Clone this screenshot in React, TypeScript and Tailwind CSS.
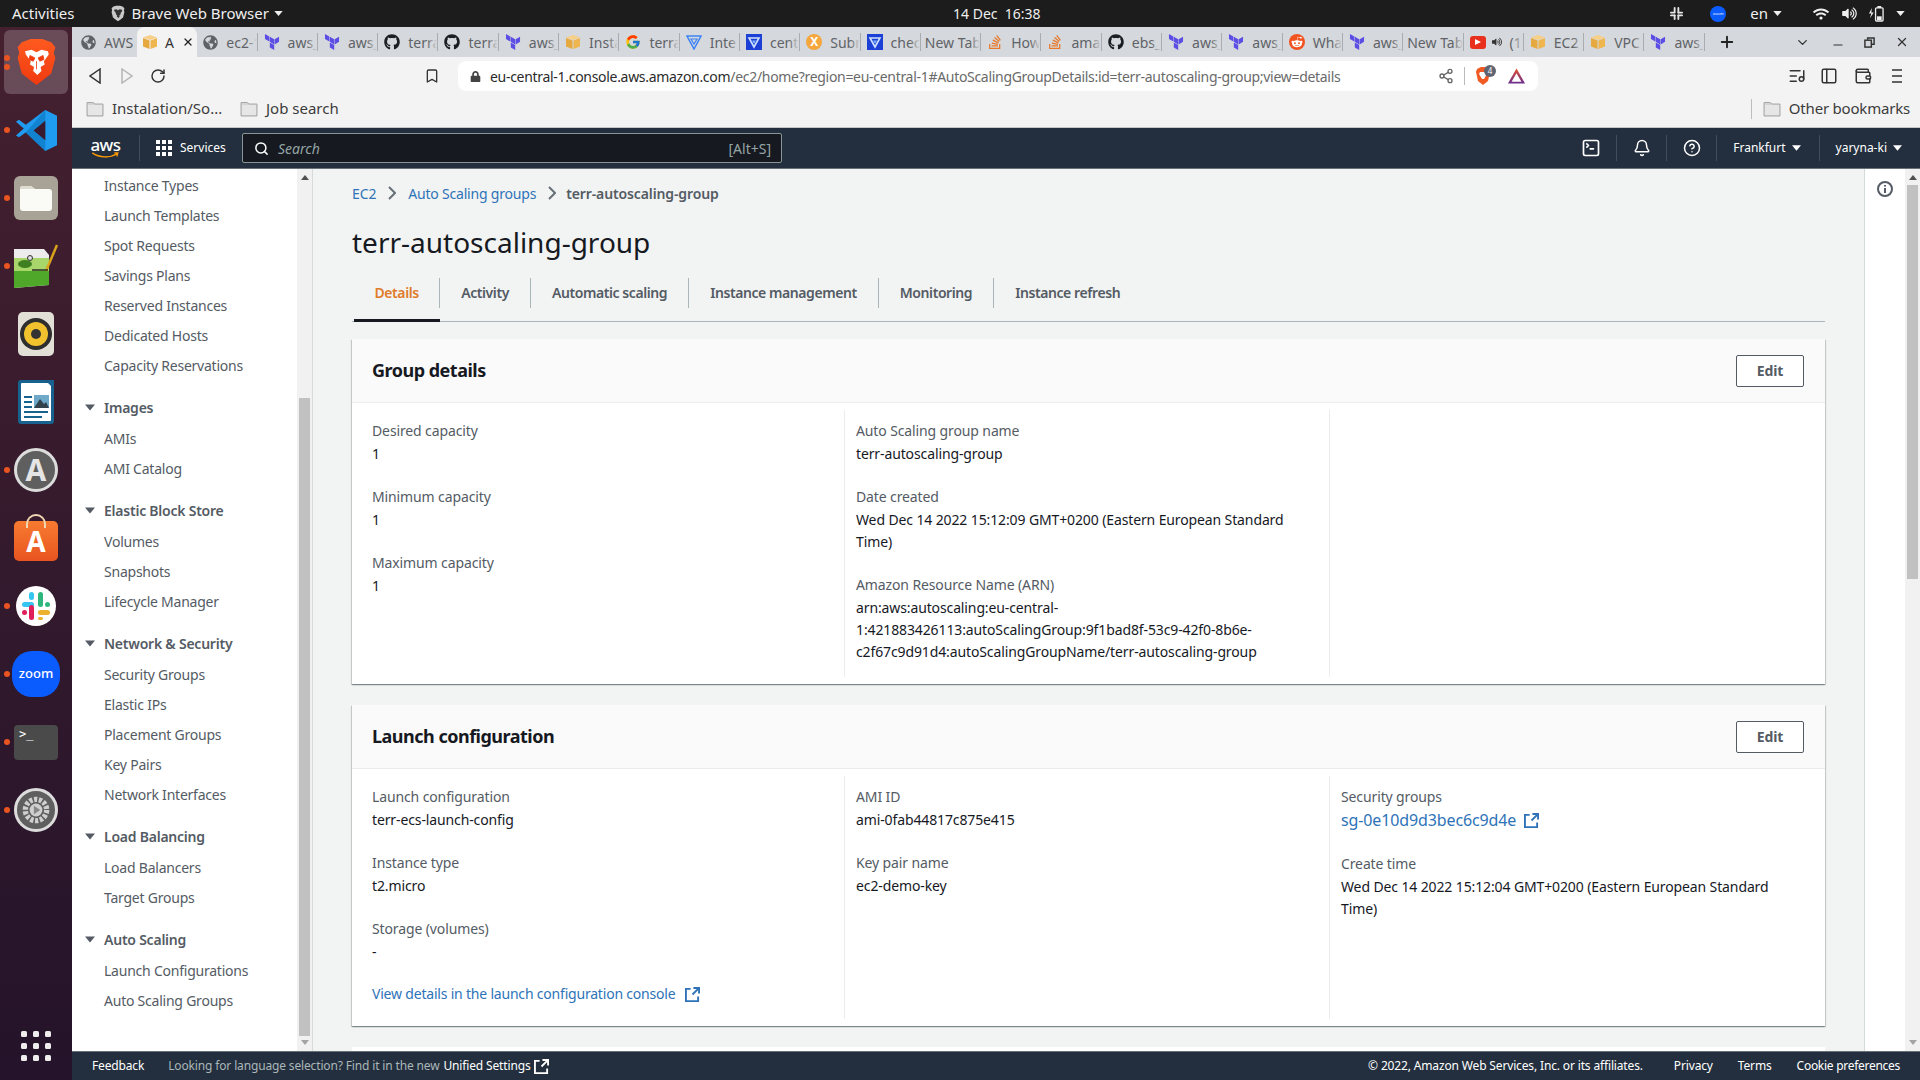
import { ReactNode } from 'react';
import {
  Bell,
  Bookmark,
  CircleHelp,
  ChevronDown,
  ListMusic,
  Minus,
  PanelLeft,
  Plus,
  RotateCw,
  Search,
  Share2,
  SquareTerminal,
  Wallet,
  X,
} from 'lucide-react';
import { FaGithub, FaGlobeAmericas, FaLock, FaRedditAlien, FaStackOverflow, FaVolumeUp, FaWifi } from 'react-icons/fa';
import { FcGoogle } from 'react-icons/fc';
import { SiTerraform } from 'react-icons/si';

function Caret({ className = 'w-[9px] h-[6px] fill-white' }: { className?: string }) {
  return (
    <svg viewBox="0 0 10 6" className={className}>
      <polygon points="0,0 10,0 5,6" />
    </svg>
  );
}

function AwsBox() {
  return (
    <svg viewBox="0 0 16 16" className="w-4 h-4 shrink-0">
      <polygon points="8,1 15,3.5 8,6 1,3.5" fill="#f7cf87" />
      <polygon points="1,4 7.5,6.4 7.5,15 1,12.5" fill="#e6a93f" />
      <polygon points="15,4 8.5,6.4 8.5,15 15,12.5" fill="#efb650" />
    </svg>
  );
}

function VShield() {
  return (
    <svg viewBox="0 0 16 16" className="w-4 h-4 shrink-0">
      <rect width="16" height="16" fill="#1c3fd6" />
      <path d="M3 4h10l-5 9z" fill="none" stroke="#cfe0ff" strokeWidth="1.6" />
      <path d="M6 6.5h4L8 10z" fill="#7fb2ff" />
    </svg>
  );
}

function TabGlyph({ kind }: { kind: string }) {
  switch (kind) {
    case 'globe':
      return <FaGlobeAmericas className="w-[15px] h-[15px] shrink-0 text-[#5f6368]" />;
    case 'box':
      return <AwsBox />;
    case 'tf':
      return <SiTerraform className="w-4 h-4 shrink-0 text-[#5c4ee5]" />;
    case 'gh':
      return <FaGithub className="w-4 h-4 shrink-0 text-[#1b1f23]" />;
    case 'g':
      return <FcGoogle className="w-4 h-4 shrink-0" />;
    case 'vg':
      return (
        <svg viewBox="0 0 16 16" className="w-4 h-4 shrink-0">
          <path d="M1 2h14l-7 13z" fill="none" stroke="#3b82f6" strokeWidth="1.5" />
          <path d="M5 5h6l-3 5z" fill="none" stroke="#3b82f6" strokeWidth="1.2" />
        </svg>
      );
    case 'v':
      return <VShield />;
    case 'x':
      return (
        <div className="w-4 h-4 shrink-0 rounded-full bg-[#f5a63c] text-white text-[12px] leading-4 text-center font-bold">
          X
        </div>
      );
    case 'so':
      return <FaStackOverflow className="w-4 h-4 shrink-0 text-[#e8792b]" />;
    case 'reddit':
      return (
        <div className="w-4 h-4 shrink-0 rounded-full bg-[#f1521f] flex items-center justify-center">
          <FaRedditAlien className="w-3 h-3 text-white" />
        </div>
      );
    case 'yt':
      return (
        <div className="flex items-center gap-[6px] shrink-0">
          <div className="w-4 h-[13px] rounded-[3px] bg-[#e8301c] flex items-center justify-center">
            <svg viewBox="0 0 6 6" className="w-[6px] h-[6px] fill-white">
              <polygon points="0,0 6,3 0,6" />
            </svg>
          </div>
          <FaVolumeUp className="w-[10px] h-[10px] text-[#333]" />
        </div>
      );
    default:
      return null;
  }
}

const tabs = [
  { kind: 'box', label: 'A', active: true },
  { kind: 'globe', label: 'ec2-1' },
  { kind: 'tf', label: 'aws_' },
  { kind: 'tf', label: 'aws_' },
  { kind: 'gh', label: 'terra' },
  { kind: 'gh', label: 'terra' },
  { kind: 'tf', label: 'aws_' },
  { kind: 'box', label: 'Insta' },
  { kind: 'g', label: 'terra' },
  { kind: 'vg', label: 'Inte' },
  { kind: 'v', label: 'cent' },
  { kind: 'x', label: 'Subm' },
  { kind: 'v', label: 'chec' },
  { kind: '', label: 'New Tab' },
  { kind: 'so', label: 'How' },
  { kind: 'so', label: 'ama' },
  { kind: 'gh', label: 'ebs_' },
  { kind: 'tf', label: 'aws_' },
  { kind: 'tf', label: 'aws_' },
  { kind: 'reddit', label: 'Wha' },
  { kind: 'tf', label: 'aws_' },
  { kind: '', label: 'New Tab' },
  { kind: 'yt', label: '(1' },
  { kind: 'box', label: 'EC2' },
  { kind: 'box', label: 'VPC' },
  { kind: 'tf', label: 'aws_' },
];

function TabStrip() {
  return (
    <div className="h-[30px] bg-[#d5d8dc] flex items-stretch text-[14px] font-['Noto_Sans',sans-serif] text-[#5f6368] shrink-0">
      <div className="w-[65px] flex items-center gap-[8px] pl-[9px] shrink-0 overflow-hidden">
        <TabGlyph kind="globe" />
        <span className="whitespace-nowrap">AWS</span>
      </div>
      {tabs.map((t, i) =>
        t.active ? (
          <div key={i} className="w-[60.3px] bg-[#f3f3f3] rounded-t-lg flex items-center gap-[7px] pl-[5px] shrink-0 text-[#333]">
            <TabGlyph kind={t.kind} />
            <span>{t.label}</span>
            <X className="w-[12px] h-[12px] ml-[1px] text-[#222]" strokeWidth={2.5} />
          </div>
        ) : (
          <div key={i} className="w-[60.3px] flex items-center shrink-0 overflow-hidden relative">
            <div className={`flex items-center gap-[8px] flex-1 overflow-hidden ${t.kind ? 'pl-[6px]' : 'pl-[4px]'}`}>
              <TabGlyph kind={t.kind} />
              <span className="whitespace-nowrap">{t.label}</span>
            </div>
            <div className="absolute right-0 top-[6px] bottom-[6px] w-px bg-[#a9adb1]" />
            <div className="absolute right-px top-0 bottom-0 w-[10px] bg-gradient-to-r from-transparent to-[#d5d8dc]" />
          </div>
        ),
      )}
      <div className="flex-1 flex items-center">
        <Plus className="w-[18px] h-[18px] ml-[13px] text-[#222]" strokeWidth={2.5} />
        <ChevronDown className="w-[15px] h-[15px] ml-[59px] text-[#333]" strokeWidth={2.2} />
        <Minus className="w-[14px] h-[14px] ml-[21px] mt-[6px] text-[#333]" strokeWidth={2} />
        <svg viewBox="0 0 12 12" className="w-[11px] h-[11px] ml-[19px] fill-none stroke-[#333] stroke-[1.6]">
          <rect x="1" y="3.5" width="7" height="7.5" />
          <path d="M4 3V1h7v7H8.5" />
        </svg>
        <X className="w-[14px] h-[14px] ml-[20px] text-[#333]" strokeWidth={2.2} />
      </div>
    </div>
  );
}

function Toolbar() {
  return (
    <div className="h-[37px] bg-[#f3f3f3] flex items-center shrink-0 font-['Noto_Sans',sans-serif]">
      <svg viewBox="0 0 12 16" className="ml-[17px] w-[12px] h-[16px] fill-none stroke-[#333] stroke-[1.5]">
        <polygon points="11,1 1,8 11,15" />
      </svg>
      <svg viewBox="0 0 12 16" className="ml-[20px] w-[12px] h-[16px] fill-none stroke-[#b5b5b5] stroke-[1.5]">
        <polygon points="1,1 11,8 1,15" />
      </svg>
      <RotateCw className="ml-[17px] w-[16px] h-[16px] text-[#333]" strokeWidth={2.2} />
      <Bookmark className="ml-[258px] w-[16px] h-[16px] text-[#333]" strokeWidth={2} />
      <div className="ml-[18px] w-[1080px] h-[30px] bg-white rounded-lg flex items-center text-[14px] mt-[1px]">
        <FaLock className="ml-[12px] w-[11px] h-[11px] text-[#444]" />
        <div className="ml-[9px] w-[852px] whitespace-nowrap tracking-[-0.3px] text-[#6a6a6a]">
          <span className="text-[#2b2b2b]">eu-central-1.console.aws.amazon.com</span>
          <span>/ec2/home?region=eu-central-1#AutoScalingGroupDetails:id=terr-autoscaling-group;view=details</span>
        </div>
        <Share2 className="ml-[96px] w-[16px] h-[16px] text-[#666]" strokeWidth={2} />
        <div className="ml-[10px] w-px h-[18px] bg-[#bbb]" />
        <div className="relative ml-[10px] w-[20px] h-[20px]">
          <svg viewBox="0 0 16 20" className="w-[16px] h-[20px]">
            <path d="M2 3l4-2h4l4 2 1 3-2 9-5 4-5-4-2-9z" fill="#f15a22" />
            <path d="M5 6h6l1 2-3 5H7L4 8z" fill="#fff" />
          </svg>
          <div className="absolute -top-[1px] left-[9px] w-[12px] h-[12px] rounded-full bg-[#5f6470] text-white text-[8px] leading-[12px] text-center">4</div>
        </div>
        <svg viewBox="0 0 20 18" className="ml-[12px] w-[19px] h-[18px]">
          <defs>
            <linearGradient id="bat" x1="0" y1="0" x2="0" y2="1">
              <stop offset="0" stopColor="#e8502b" />
              <stop offset="1" stopColor="#662d91" />
            </linearGradient>
          </defs>
          <polygon points="10,1 19,17 1,17" fill="url(#bat)" />
          <polygon points="10,6 15.2,15 4.8,15" fill="#fff" />
        </svg>
      </div>
      <ListMusic className="ml-[250px] w-[18px] h-[18px] text-[#333]" strokeWidth={2} />
      <PanelLeft className="ml-[14px] w-[18px] h-[18px] text-[#333]" strokeWidth={2} />
      <Wallet className="ml-[16px] w-[18px] h-[18px] text-[#333]" strokeWidth={2} />
      <svg viewBox="0 0 10 16" className="ml-[20px] w-[10px] h-[16px] stroke-[#333] stroke-[1.6]">
        <path d="M0 2h10M0 8h10M0 14h10" />
      </svg>
    </div>
  );
}

function FolderIcon() {
  return (
    <svg viewBox="0 0 18 17" className="w-[18px] h-[17px] shrink-0">
      <path d="M1 2.5h6l2 1.5h8v12H1z" fill="#d4d4d4" stroke="#a8a8a8" strokeWidth="1" />
      <rect x="2" y="5" width="14" height="10" fill="#e6e6e6" />
    </svg>
  );
}

function BookmarksBar() {
  return (
    <div className="h-[34px] bg-[#f3f3f3] border-b border-[#c4c7ca] flex items-center shrink-0 text-[15px] text-[#3c3c3c] font-['Noto_Sans',sans-serif] pl-[14px] pr-[10px] pb-[4px]">
      <FolderIcon />
      <span className="ml-[8px] w-[111px] whitespace-nowrap">Instalation/So...</span>
      <div className="ml-[17px]"><FolderIcon /></div>
      <span className="ml-[8px]">Job search</span>
      <div className="ml-auto w-px h-[20px] bg-[#bdbdbd]" />
      <div className="ml-[11px]"><FolderIcon /></div>
      <span className="ml-[8px] tracking-[-0.2px]">Other bookmarks</span>
    </div>
  );
}

function NavSep() {
  return <div className="w-px h-[26px] bg-[#414d5c] shrink-0" />;
}

function AwsNav() {
  return (
    <div className="h-[41px] bg-[#232f3e] border-b border-[#687078] flex items-center shrink-0 text-white text-[12px] font-['Noto_Sans',sans-serif]">
      <div className="ml-[18px] w-[31px] flex flex-col items-center">
        <span className="text-[17px] leading-[15px] font-medium tracking-[-0.5px]">aws</span>
        <svg viewBox="0 0 32 8" className="w-[31px] h-[7px] fill-none stroke-[#f90] stroke-[1.6]">
          <path d="M1 1c8 6 20 6 28 1M26 1l4 0-1 4" />
        </svg>
      </div>
      <div className="ml-[18px]"><NavSep /></div>
      <svg viewBox="0 0 16 16" className="ml-[16px] w-[16px] h-[16px] fill-white">
        {[0, 6, 12].flatMap((y) => [0, 6, 12].map((x) => <rect key={`${x}-${y}`} x={x} y={y} width="4" height="4" />))}
      </svg>
      <span className="ml-[8px] w-[45px]">Services</span>
      <div className="ml-[17px] w-[540px] h-[30px] rounded-[2px] border border-[#879596] bg-[#16191f] flex items-center">
        <Search className="ml-[11px] w-[15px] h-[15px] text-white" strokeWidth={2.4} />
        <span className="ml-[9px] text-[14px] italic text-[#95a5a6]">Search</span>
        <span className="ml-auto mr-[10px] text-[14px] text-[#95a5a6]">[Alt+S]</span>
      </div>
      <div className="ml-auto flex items-center">
        <SquareTerminal className="w-[20px] h-[20px]" strokeWidth={2} />
        <div className="ml-[15px]"><NavSep /></div>
        <Bell className="ml-[16px] w-[18px] h-[18px]" strokeWidth={2} />
        <div className="ml-[15px]"><NavSep /></div>
        <CircleHelp className="ml-[16px] w-[18px] h-[18px]" strokeWidth={2} />
        <div className="ml-[15px]"><NavSep /></div>
        <span className="ml-[16px]">Frankfurt</span>
        <Caret className="ml-[6px] w-[9px] h-[6px] fill-white" />
        <div className="ml-[18px]"><NavSep /></div>
        <span className="ml-[16px]">yaryna-ki</span>
        <Caret className="ml-[6px] mr-[18px] w-[9px] h-[6px] fill-white" />
      </div>
    </div>
  );
}

const sideNav: { title?: string; items: string[] }[] = [
  {
    items: ['Instance Types', 'Launch Templates', 'Spot Requests', 'Savings Plans', 'Reserved Instances', 'Dedicated Hosts', 'Capacity Reservations'],
  },
  { title: 'Images', items: ['AMIs', 'AMI Catalog'] },
  { title: 'Elastic Block Store', items: ['Volumes', 'Snapshots', 'Lifecycle Manager'] },
  { title: 'Network & Security', items: ['Security Groups', 'Elastic IPs', 'Placement Groups', 'Key Pairs', 'Network Interfaces'] },
  { title: 'Load Balancing', items: ['Load Balancers', 'Target Groups'] },
  { title: 'Auto Scaling', items: ['Launch Configurations', 'Auto Scaling Groups'] },
];

function Scrollbar({ thumb }: { thumb: string }) {
  return (
    <div className="w-[15px] h-full bg-[#f1f1f1] flex flex-col items-center shrink-0 relative">
      <Caret className="mt-[6px] w-[8px] h-[5px] fill-[#505050] rotate-180" />
      <div className={thumb} />
      <Caret className="absolute bottom-[6px] w-[8px] h-[5px] fill-[#a3a3a3]" />
    </div>
  );
}

function Sidebar() {
  return (
    <div className="w-[241px] h-full flex shrink-0 bg-white border-r border-[#d5dbdb] text-[14px] text-[#545b64] tracking-[-0.23px]">
      <div className="w-[225px] pt-[2px]">
        {sideNav.map((group, i) => (
          <div key={i} className={group.title ? 'mt-[12px]' : ''}>
            {group.title && (
              <div className="h-[31px] pb-[3px] flex items-center font-semibold">
                <Caret className="ml-[13px] w-[10px] h-[7px] fill-[#545b64]" />
                <span className="ml-[9px]">{group.title}</span>
              </div>
            )}
            {group.items.map((item) => (
              <div key={item} className="h-[30px] leading-[30px] pl-[32px]">{item}</div>
            ))}
          </div>
        ))}
      </div>
      <Scrollbar thumb="mt-[218px] w-[11px] h-[638px] bg-[#c1c1c1]" />
    </div>
  );
}

function ExternalIcon({ className = 'text-[#2e73b8]' }: { className?: string }) {
  return (
    <svg viewBox="0 0 16 16" className={`w-[15px] h-[15px] inline-block fill-none stroke-current stroke-2 ${className}`}>
      <path d="M6 2H1v13h13v-5" />
      <path d="M8 8l6-6M9 1h6v6" />
    </svg>
  );
}

function Field({ label, children }: { label: string; children: ReactNode }) {
  return (
    <div className="mb-[21px]">
      <div className="text-[#545b64] leading-[22px]">{label}</div>
      <div className="mt-px text-[#16191f] leading-[22px]">{children}</div>
    </div>
  );
}

function Card({ title, children }: { title: string; children: ReactNode }) {
  return (
    <div className="bg-white shadow-[0_1px_1px_0_rgba(0,28,36,0.3),1px_1px_1px_0_rgba(0,28,36,0.15),-1px_1px_1px_0_rgba(0,28,36,0.15)]">
      <div className="h-[64px] bg-[#fafafa] border-b border-[#eaeded] flex items-center justify-between pl-[20px] pr-[21px]">
        <div className="text-[18px] font-bold text-[#16191f] tracking-[-0.5px]">{title}</div>
        <button className="w-[68px] h-[32px] border border-[#545b64] rounded-[2px] bg-white text-[14px] font-bold text-[#545b64]">
          Edit
        </button>
      </div>
      {children}
    </div>
  );
}

function Column({ children, width }: { children?: ReactNode; width: string }) {
  return <div className={`${width} pt-[10px] pr-[16px] shrink-0`}>{children}</div>;
}

const tabNames = ['Details', 'Activity', 'Automatic scaling', 'Instance management', 'Monitoring', 'Instance refresh'];

function PageContent() {
  return (
    <div className="flex-1 h-full bg-[#f2f3f3] px-[39px] overflow-hidden text-[14px] tracking-[-0.12px]">
      <div className="mt-[13px] h-[22px] flex items-center text-[#2e73b8]">
        <span>EC2</span>
        <svg viewBox="0 0 8 14" className="ml-[12px] w-[8px] h-[14px] fill-none stroke-[#687078] stroke-2"><path d="M1 1l6 6-6 6" /></svg>
        <span className="ml-[12px] tracking-[-0.2px]">Auto Scaling groups</span>
        <svg viewBox="0 0 8 14" className="ml-[12px] w-[8px] h-[14px] fill-none stroke-[#687078] stroke-2"><path d="M1 1l6 6-6 6" /></svg>
        <span className="ml-[10px] font-semibold text-[#545b64]">terr-autoscaling-group</span>
      </div>
      <h1 className="mt-[18px] h-[40px] leading-[40px] text-[28px] text-[#16191f] tracking-normal">terr-autoscaling-group</h1>
      <div className="mt-[10px] h-[50px] flex items-start border-b border-[#aab7b8] font-semibold text-[#545b64] tracking-[-0.42px]">
        {tabNames.map((name, i) => (
          <div
            key={name}
            className={
              i === 0
                ? 'ml-[2px] h-[50px] pt-[6px] border-b-[3px] border-[#16191f]'
                : 'h-[50px] pt-[6px]'
            }
          >
            <div className={`h-[30px] leading-[30px] ${i === 0 ? 'px-[20.5px] text-[#e07b2a]' : 'px-[21px]'} ${i < tabNames.length - 1 ? 'border-r border-[#aab7b8]' : ''}`}>
              {name}
            </div>
          </div>
        ))}
      </div>
      <div className="mt-[17px]">
        <Card title="Group details">
          <div className="flex py-[7px] h-[281px]">
            <Column width="w-[493px] pl-[20px] border-r border-[#eaeded]">
              <Field label="Desired capacity">1</Field>
              <Field label="Minimum capacity">1</Field>
              <Field label="Maximum capacity">1</Field>
            </Column>
            <Column width="w-[485px] pl-[11px] border-r border-[#eaeded]">
              <Field label="Auto Scaling group name">terr-autoscaling-group</Field>
              <Field label="Date created">Wed Dec 14 2022 15:12:09 GMT+0200 (Eastern European Standard Time)</Field>
              <Field label="Amazon Resource Name (ARN)">
                arn:aws:autoscaling:eu-central-1:421883426113:autoScalingGroup:9f1bad8f-53c9-42f0-8b6e-c2f67c9d91d4:autoScalingGroupName/terr-autoscaling-group
              </Field>
            </Column>
            <Column width="w-[490px] pl-[11px]" />
          </div>
        </Card>
      </div>
      <div className="mt-[21px]">
        <Card title="Launch configuration">
          <div className="flex py-[7px] h-[257px]">
            <Column width="w-[493px] pl-[20px] border-r border-[#eaeded]">
              <Field label="Launch configuration">terr-ecs-launch-config</Field>
              <Field label="Instance type">t2.micro</Field>
              <Field label="Storage (volumes)">-</Field>
              <div className="text-[#2e73b8] leading-[22px] -mt-[1px] tracking-[-0.2px]">
                View details in the launch configuration console <ExternalIcon className="ml-[6px] -mt-[2px] text-[#2e73b8] align-middle" />
              </div>
            </Column>
            <Column width="w-[485px] pl-[11px] border-r border-[#eaeded]">
              <Field label="AMI ID">ami-0fab44817c875e415</Field>
              <Field label="Key pair name">ec2-demo-key</Field>
            </Column>
            <Column width="w-[490px] pl-[11px]">
              <Field label="Security groups">
                <span className="text-[16px] text-[#2e73b8]">sg-0e10d9d3bec6c9d4e</span>
                <ExternalIcon className="ml-[8px] -mt-[3px] text-[#2e73b8] align-middle" />
              </Field>
              <Field label="Create time">Wed Dec 14 2022 15:12:04 GMT+0200 (Eastern European Standard Time)</Field>
            </Column>
          </div>
        </Card>
      </div>
      <div className="mt-[21px] h-[60px] bg-white" />
    </div>
  );
}

function RightRail() {
  return (
    <div className="h-full flex shrink-0">
      <div className="w-[41px] h-full bg-white border-l border-[#d5dbdb] flex justify-center pt-[12px]">
        <svg viewBox="0 0 16 16" className="w-[16px] h-[16px] fill-none stroke-[#545b64] stroke-2">
          <circle cx="8" cy="8" r="7" />
          <path d="M8 7v5M8 4v1.6" />
        </svg>
      </div>
      <Scrollbar thumb="mt-[5px] w-[11px] h-[394px] bg-[#c1c1c1]" />
    </div>
  );
}

function AwsFooter() {
  return (
    <div className="h-[29px] bg-[#232f3e] border-t border-[#687078] flex items-center shrink-0 text-[12px] text-white font-['Noto_Sans',sans-serif] tracking-[-0.15px]">
      <span className="ml-[20px]">Feedback</span>
      <span className="ml-[24px] text-[#aab7b8]">Looking for language selection? Find it in the new</span>
      <span className="ml-[4px]">Unified Settings</span>
      <ExternalIcon className="ml-[3px] text-white" />
      <span className="ml-auto">© 2022, Amazon Web Services, Inc. or its affiliates.</span>
      <span className="ml-[31px]">Privacy</span>
      <span className="ml-[25px]">Terms</span>
      <span className="ml-[25px] mr-[20px] tracking-[-0.28px]">Cookie preferences</span>
    </div>
  );
}

function BraveIcon({ size = 'w-[50px] h-[58px]' }: { size?: string }) {
  return (
    <svg viewBox="0 0 50 58" className={size}>
      <defs>
        <linearGradient id="brv" x1="0" y1="0" x2="0" y2="1">
          <stop offset="0" stopColor="#ff5a1f" />
          <stop offset="1" stopColor="#f03a10" />
        </linearGradient>
      </defs>
      <path d="M12 3l6-2h14l6 2 5 2 5 6-2 7 2 6-5 19-10 8-8 6-8-6-10-8L2 24l2-6-2-7 5-6z" fill="url(#brv)" />
      <path d="M11 16l8-2 6 3 6-3 8 2 1 4-6 8 1 4-5 3 1 5-5 5-5-5 1-5-5-3 1-4-6-8z" fill="#fff" />
      <path d="M17 21l6 3-2 4-5-2zM33 21l-6 3 2 4 5-2zM25 28v10" fill="#f03a10" stroke="#f03a10" />
    </svg>
  );
}

function DockItem({ dots = 1, active, children }: { dots?: number; active?: boolean; children: ReactNode }) {
  return (
    <div className="h-[68px] relative flex items-center justify-center">
      {active && <div className="absolute left-[4px] right-[4px] top-[2px] bottom-[2px] rounded-md bg-white/20" />}
      {dots > 0 && (
        <div className="absolute left-[4px] top-0 bottom-0 flex flex-col justify-center gap-[3px]">
          {Array.from({ length: dots }).map((_, i) => (
            <div key={i} className="w-[6px] h-[6px] rounded-full bg-[#e95420]" />
          ))}
        </div>
      )}
      <div className="relative flex items-center justify-center">{children}</div>
    </div>
  );
}

function Dock() {
  return (
    <div className="w-[72px] h-full shrink-0 bg-gradient-to-b from-[#45202f] to-[#24132a] flex flex-col pt-px">
      <DockItem dots={2} active>
        <BraveIcon size="w-[41px] h-[48px]" />
      </DockItem>
      <DockItem>
        <svg viewBox="0 0 44 44" className="w-[43px] h-[43px]">
          <path d="M31 1l12 6v30l-12 6-20-19-7 5-3-2 8-7-8-7 3-2 7 5z" fill="#1f9cf0" />
          <path d="M31 1v42L11 24z" fill="#0065a9" opacity="0.45" />
          <path d="M31 12L19 22l12 10z" fill="#3a1a2d" />
        </svg>
      </DockItem>
      <DockItem>
        <div className="w-[44px] h-[44px] rounded-[6px] bg-[#a8a396] flex items-center justify-center">
          <svg viewBox="0 0 32 26" className="w-[32px] h-[26px]">
            <path d="M0 4q0-3 3-3h8l4 3h14q3 0 3 3v16q0 3-3 3H3q-3 0-3-3z" fill="#fafaf7" />
            <path d="M0 4q0-3 3-3h8l4 3z" fill="#dedbd0" />
          </svg>
        </div>
      </DockItem>
      <DockItem>
        <svg viewBox="0 0 44 44" className="w-[44px] h-[44px]">
          <polygon points="0,5 30,5 35,11 35,41 0,44" fill="#ececec" />
          <polygon points="0,26 35,26 35,41 0,44" fill="#4fa82a" />
          <polygon points="0,14 35,14 35,27 0,27" fill="#a9d66b" />
          <ellipse cx="11" cy="20" rx="7" ry="4" fill="#3f7f21" />
          <circle cx="16" cy="14" r="2.5" fill="#dcdcdc" stroke="#333" />
          <path d="M32 27L43 1" stroke="#d9a31a" strokeWidth="2.5" />
          <path d="M18 26h16" stroke="#222" strokeWidth="1.4" />
        </svg>
      </DockItem>
      <DockItem dots={0}>
        <div className="w-[36px] h-[44px] rounded-[5px] bg-[#e2dfd6] flex items-center justify-center">
          <div className="w-[32px] h-[32px] rounded-full bg-[#2e2e2e] flex items-center justify-center">
            <div className="w-[24px] h-[24px] rounded-full bg-[#f1c12e] flex items-center justify-center">
              <div className="w-[10px] h-[10px] rounded-full bg-[#333]" />
            </div>
          </div>
        </div>
      </DockItem>
      <DockItem dots={0}>
        <svg viewBox="0 0 36 44" className="w-[36px] h-[44px]">
          <path d="M3 0h24l9 9v32q0 3-3 3H3q-3 0-3-3V3q0-3 3-3z" fill="#18628f" />
          <rect x="3" y="3" width="30" height="38" rx="1" fill="#fff" />
          <polygon points="27,0 36,0 36,9" fill="#18628f" />
          <rect x="6" y="16" width="8" height="2" fill="#18628f" />
          <rect x="6" y="21" width="8" height="2" fill="#18628f" />
          <rect x="6" y="26" width="8" height="2" fill="#18628f" />
          <rect x="6" y="31" width="24" height="2" fill="#18628f" />
          <rect x="6" y="36" width="18" height="2" fill="#18628f" />
          <rect x="16" y="15" width="15" height="13" fill="#6ea9c9" />
          <polygon points="16,28 22,19 26,24 28,22 31,28" fill="#31424d" />
        </svg>
      </DockItem>
      <DockItem>
        <div className="w-[44px] h-[44px] rounded-full bg-[#5f5f5f] border-[3px] border-[#dcdcdc] flex items-center justify-center text-[#e5e5e5] text-[30px] font-bold leading-none font-['Noto_Sans',sans-serif]">
          A
        </div>
      </DockItem>
      <DockItem dots={0}>
        <div className="w-[44px] h-[40px] mt-[6px] rounded-[5px] bg-gradient-to-b from-[#f77a30] to-[#e95420] flex items-center justify-center text-white text-[28px] font-bold leading-none relative font-['Noto_Sans',sans-serif]">
          <div className="absolute -top-[7px] left-[12px] w-[20px] h-[14px] rounded-t-full border-2 border-[#f2d9b3] border-b-0" />
          A
        </div>
      </DockItem>
      <DockItem>
        <div className="w-[40px] h-[40px] rounded-full bg-white flex items-center justify-center">
          <svg viewBox="0 0 28 28" className="w-[28px] h-[28px]">
            <rect x="0" y="10" width="12" height="5" rx="2.5" fill="#36c5f0" />
            <rect x="7" y="0" width="5" height="8" rx="2.5" fill="#36c5f0" />
            <rect x="16" y="0" width="5" height="15" rx="2.5" fill="#2eb67d" />
            <rect x="23" y="10" width="5" height="5" rx="2.5" fill="#2eb67d" />
            <rect x="16" y="18" width="12" height="5" rx="2.5" fill="#ecb22e" />
            <rect x="16" y="25" width="5" height="3" rx="1.5" fill="#ecb22e" />
            <rect x="7" y="13" width="5" height="15" rx="2.5" fill="#e01e5a" />
            <rect x="0" y="18" width="5" height="5" rx="2.5" fill="#e01e5a" />
          </svg>
        </div>
      </DockItem>
      <DockItem>
        <div className="w-[48px] h-[46px] rounded-[20px] bg-[#0b5cff] flex items-center justify-center text-white text-[13px] font-medium font-['Noto_Sans',sans-serif]">
          zoom
        </div>
      </DockItem>
      <DockItem>
        <div className="w-[44px] h-[35px] rounded-[4px] bg-[#4a4a4a] text-white text-[12px] leading-[14px] pl-[5px] pt-[2px] font-['DejaVu_Sans_Mono',monospace]">
          {'>_'}
        </div>
      </DockItem>
      <DockItem>
        <div className="w-[44px] h-[44px] rounded-full bg-[#5f5f5f] border-[3px] border-[#dcdcdc] flex items-center justify-center">
          <svg viewBox="0 0 30 30" className="w-[32px] h-[32px]">
            <circle cx="15" cy="15" r="10" fill="none" stroke="#cfcfcf" strokeWidth="5" strokeDasharray="3 1.5" />
            <circle cx="15" cy="15" r="6" fill="#cfcfcf" />
            <polygon points="13,11 19,15 13,19" fill="#888" />
          </svg>
        </div>
      </DockItem>
      <div className="mt-auto mb-[19px] grid grid-cols-3 gap-x-[6px] gap-y-[6px] mx-auto">
        {Array.from({ length: 9 }).map((_, i) => (
          <div key={i} className="w-[6px] h-[6px] rounded-[1.5px] bg-[#eeeeee]" />
        ))}
      </div>
    </div>
  );
}

function SystemBar() {
  return (
    <div className="h-[27px] bg-[#1c1c1c] relative flex items-center text-[15px] text-[#efefef] font-['Noto_Sans',sans-serif] shrink-0">
      <span className="ml-[12px]">Activities</span>
      <svg viewBox="0 0 50 58" className="ml-[36px] w-[14px] h-[17px]">
        <path d="M12 3l6-2h14l6 2 5 2 5 6-2 7 2 6-5 19-10 8-8 6-8-6-10-8L2 24l2-6-2-7 5-6z" fill="#c9c9c9" />
        <path d="M11 16l8-2 6 3 6-3 8 2 1 4-6 8 1 4-5 3 1 5-5 5-5-5 1-5-5-3 1-4-6-8z" fill="#333" />
      </svg>
      <span className="ml-[7px]">Brave Web Browser</span>
      <Caret className="ml-[5px] w-[9px] h-[5px] fill-[#efefef]" />
      <span className="absolute left-[953px] whitespace-pre text-[14px]">14 Dec  16:38</span>
      <div className="ml-auto flex items-center">
        <svg viewBox="0 0 14 14" className="w-[13px] h-[13px] fill-[#e5e5e5]">
          <rect x="0" y="5" width="6" height="2" rx="1" />
          <rect x="4" y="0" width="2" height="6" rx="1" />
          <rect x="8" y="0" width="2" height="7" rx="1" />
          <rect x="8" y="5" width="6" height="2" rx="1" />
          <rect x="8" y="8" width="6" height="2" rx="1" />
          <rect x="8" y="8" width="2" height="6" rx="1" />
          <rect x="0" y="8" width="6" height="2" rx="1" />
          <rect x="4" y="8" width="2" height="6" rx="1" />
        </svg>
        <div className="ml-[27px] w-[16px] h-[16px] rounded-full bg-[#0b5cff] text-[4px] leading-[16px] text-center text-white">zoom</div>
        <span className="ml-[24px]">en</span>
        <Caret className="ml-[5px] w-[9px] h-[5px] fill-[#efefef]" />
        <FaWifi className="ml-[31px] w-[16px] h-[14px]" />
        <FaVolumeUp className="ml-[13px] w-[15px] h-[13px]" />
        <svg viewBox="0 0 16 18" className="ml-[12px] w-[15px] h-[17px]">
          <path d="M3 3L0 9h2.5L1 14l4-6H2.5z" fill="#efefef" />
          <rect x="7" y="3" width="8" height="14" rx="1" fill="none" stroke="#efefef" strokeWidth="1.4" />
          <rect x="9" y="1" width="4" height="2" fill="#efefef" />
          <rect x="8.5" y="12" width="5" height="4" fill="#efefef" />
        </svg>
        <Caret className="ml-[12px] mr-[15px] w-[9px] h-[5px] fill-[#efefef]" />
      </div>
    </div>
  );
}

export default function App() {
  return (
    <div className="w-[1920px] h-[1080px] overflow-hidden flex flex-col font-['Noto_Sans',sans-serif]">
      <SystemBar />
      <div className="flex-1 flex min-h-0">
        <Dock />
        <div className="flex-1 flex flex-col min-w-0">
          <TabStrip />
          <Toolbar />
          <BookmarksBar />
          <AwsNav />
          <div className="flex-1 flex min-h-0">
            <Sidebar />
            <PageContent />
            <RightRail />
          </div>
          <AwsFooter />
        </div>
      </div>
    </div>
  );
}
